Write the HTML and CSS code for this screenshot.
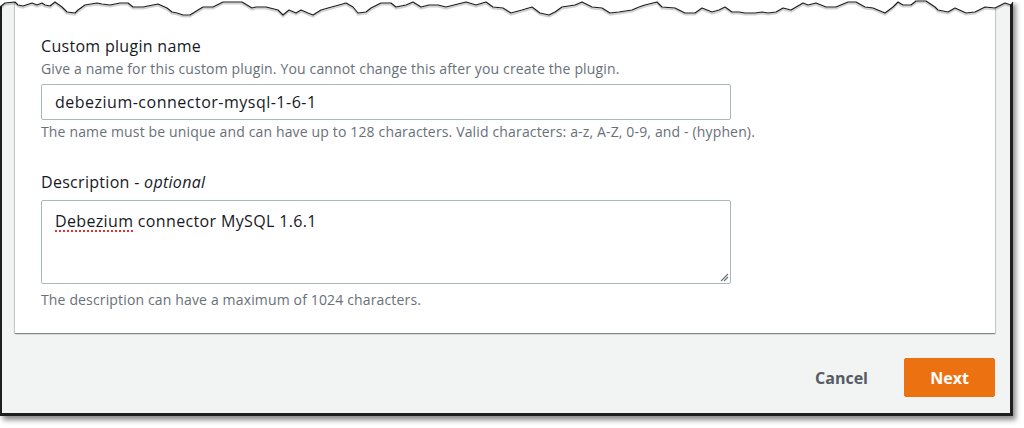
FILE: index.html
```html
<!DOCTYPE html>
<html lang="en">
<head>
<meta charset="utf-8">
<title>Custom plugin</title>
<link rel="stylesheet" href="styles.css">
</head>
<body>
<div class="frame">
  <div class="card">
    <div class="field">
      <div class="label">Custom plugin name</div>
      <div class="desc">Give a name for this custom plugin. You cannot change this after you create the plugin.</div>
      <div class="input">debezium-connector-mysql-1-6-1</div>
      <div class="hint">The name must be unique and can have up to 128 characters. Valid characters: a-z, A-Z, 0-9, and - (hyphen).</div>
    </div>
    <div class="field field-2">
      <div class="label">Description - <i>optional</i></div>
      <div class="textarea"><span class="misspelt">Debezium</span> connector MySQL 1.6.1
        <svg class="grip" width="10" height="10" viewBox="0 0 10 10"><path d="M9 2 L2 9 M9 5 L5 9" stroke="#687078" stroke-width="1.1" fill="none"/></svg>
      </div>
      <div class="hint">The description can have a maximum of 1024 characters.</div>
    </div>
  </div>
  <div class="actions">
    <button class="btn-link">Cancel</button>
    <button class="btn-primary">Next</button>
  </div>
</div>
<svg class="torn" width="1024" height="22" viewBox="0 0 1024 22">
  <path fill="#ffffff" d="M0,0 L0,7 5,3 15,2 18,5 23,6 32,3 37,5 42,3 45,5 50,6 55,2 62,7 67,12 75,13 78,10 85,5 97,3 102,4 110,5 120,3 128,3 133,7 143,7 153,5 158,4 167,8 172,12 177,13 183,15 190,15 198,10 203,7 213,7 223,2 242,2 247,5 252,8 256,7 266,7 278,10 283,15 289,10 296,13 301,10 308,13 313,15 321,10 328,8 339,5 346,3 353,7 358,13 366,12 371,8 381,3 391,3 396,7 406,5 413,2 421,7 429,5 438,5 446,7 454,5 466,2 476,5 486,2 493,7 503,8 511,13 522,10 532,7 540,13 549,15 555,12 562,7 575,5 582,2 592,7 602,8 610,13 619,12 632,10 639,7 645,5 657,2 662,7 675,8 685,13 695,13 702,8 712,12 719,10 725,7 732,12 739,12 745,13 755,13 762,12 768,13 776,12 783,8 791,10 803,3 808,5 816,3 826,7 836,7 848,2 856,2 865,7 873,8 885,13 893,7 898,2 903,5 911,5 916,1 926,1 935,7 938,10 948,12 955,8 966,13 975,12 985,7 995,8 1005,3 1011,5 1013,2 L1024,2 L1024,0 Z"/>
  <polyline fill="none" stroke="rgba(0,0,0,0.18)" stroke-width="2" transform="translate(0,1.6)" points="0,7 5,3 15,2 18,5 23,6 32,3 37,5 42,3 45,5 50,6 55,2 62,7 67,12 75,13 78,10 85,5 97,3 102,4 110,5 120,3 128,3 133,7 143,7 153,5 158,4 167,8 172,12 177,13 183,15 190,15 198,10 203,7 213,7 223,2 242,2 247,5 252,8 256,7 266,7 278,10 283,15 289,10 296,13 301,10 308,13 313,15 321,10 328,8 339,5 346,3 353,7 358,13 366,12 371,8 381,3 391,3 396,7 406,5 413,2 421,7 429,5 438,5 446,7 454,5 466,2 476,5 486,2 493,7 503,8 511,13 522,10 532,7 540,13 549,15 555,12 562,7 575,5 582,2 592,7 602,8 610,13 619,12 632,10 639,7 645,5 657,2 662,7 675,8 685,13 695,13 702,8 712,12 719,10 725,7 732,12 739,12 745,13 755,13 762,12 768,13 776,12 783,8 791,10 803,3 808,5 816,3 826,7 836,7 848,2 856,2 865,7 873,8 885,13 893,7 898,2 903,5 911,5 916,1 926,1 935,7 938,10 948,12 955,8 966,13 975,12 985,7 995,8 1005,3 1011,5"/>
  <polyline fill="none" stroke="#1a1a1a" stroke-width="1.1" stroke-linejoin="round" points="0,7 5,3 15,2 18,5 23,6 32,3 37,5 42,3 45,5 50,6 55,2 62,7 67,12 75,13 78,10 85,5 97,3 102,4 110,5 120,3 128,3 133,7 143,7 153,5 158,4 167,8 172,12 177,13 183,15 190,15 198,10 203,7 213,7 223,2 242,2 247,5 252,8 256,7 266,7 278,10 283,15 289,10 296,13 301,10 308,13 313,15 321,10 328,8 339,5 346,3 353,7 358,13 366,12 371,8 381,3 391,3 396,7 406,5 413,2 421,7 429,5 438,5 446,7 454,5 466,2 476,5 486,2 493,7 503,8 511,13 522,10 532,7 540,13 549,15 555,12 562,7 575,5 582,2 592,7 602,8 610,13 619,12 632,10 639,7 645,5 657,2 662,7 675,8 685,13 695,13 702,8 712,12 719,10 725,7 732,12 739,12 745,13 755,13 762,12 768,13 776,12 783,8 791,10 803,3 808,5 816,3 826,7 836,7 848,2 856,2 865,7 873,8 885,13 893,7 898,2 903,5 911,5 916,1 926,1 935,7 938,10 948,12 955,8 966,13 975,12 985,7 995,8 1005,3 1011,5 1013,2"/>
</svg>
</body>
</html>
```

FILE: styles.css
```css
* { box-sizing: border-box; }
html, body {
  margin: 0;
  padding: 0;
  background: #ffffff;
  font-family: "Open Sans", "Noto Sans", Arial, sans-serif;
  color: #16191f;
}
body {
  width: 1024px;
  height: 428px;
  overflow: hidden;
  position: relative;
}
.frame {
  width: 1013px;
  height: 416px;
  background: #f2f3f3;
  border-left: 2px solid #1e1e1e;
  border-right: 3px solid #1e1e1e;
  border-bottom: 3px solid #1e1e1e;
  box-shadow: 3px 4px 5px rgba(0, 0, 0, 0.45);
  padding: 0 15px 0 13px;
  display: flex;
  flex-direction: column;
}
.card {
  width: 980px;
  background: #ffffff;
  box-shadow: 0 1px 1px 0 rgba(0, 28, 36, 0.3), 1px 1px 1px 0 rgba(0, 28, 36, 0.15), -1px 1px 1px 0 rgba(0, 28, 36, 0.15);
  padding: 35px 26px 23px;
}
.label {
  font-size: 16px;
  line-height: 22px;
  letter-spacing: 0.3px;
  color: #16191f;
}
.label i { font-style: italic; }
.desc {
  font-size: 14px;
  line-height: 20px;
  letter-spacing: 0.15px;
  margin-top: 2px;
  color: #687078;
}
.input {
  width: 690px;
  height: 36px;
  margin-top: 5px;
  border: 1px solid #aab7b8;
  border-radius: 2px;
  padding: 0 13px;
  font-size: 16px;
  line-height: 34px;
  letter-spacing: 0.5px;
  color: #16191f;
}
.hint {
  font-size: 14px;
  line-height: 20px;
  letter-spacing: 0.15px;
  margin-top: 2px;
  color: #687078;
}
.field-2 { margin-top: 29px; }
.textarea {
  position: relative;
  width: 690px;
  height: 84px;
  margin-top: 7px;
  border: 1px solid #aab7b8;
  border-radius: 2px;
  padding: 9px 13px;
  font-size: 16px;
  line-height: 22px;
  letter-spacing: 0.35px;
  color: #16191f;
  margin-bottom: 6px;
}
.misspelt {
  text-decoration: underline dotted #e0312e;
  text-decoration-thickness: 1.5px;
  text-underline-offset: 3px;
}
.grip {
  position: absolute;
  right: 1px;
  bottom: 1px;
}
.actions {
  display: flex;
  justify-content: flex-end;
  align-items: center;
  gap: 16px;
  margin-top: 25px;
}
.btn-link, .btn-primary {
  font-family: inherit;
  font-size: 16px;
  font-weight: 700;
  border-radius: 2px;
  height: 39px;
  cursor: pointer;
}
.btn-link {
  background: transparent;
  border: none;
  color: #545b64;
  padding: 0 20px;
}
.btn-primary {
  width: 91px;
  background: #ec7211;
  border: 1px solid #ec7211;
  color: #ffffff;
  padding: 0;
}
.torn {
  position: absolute;
  top: 0;
  left: 0;
}
```
